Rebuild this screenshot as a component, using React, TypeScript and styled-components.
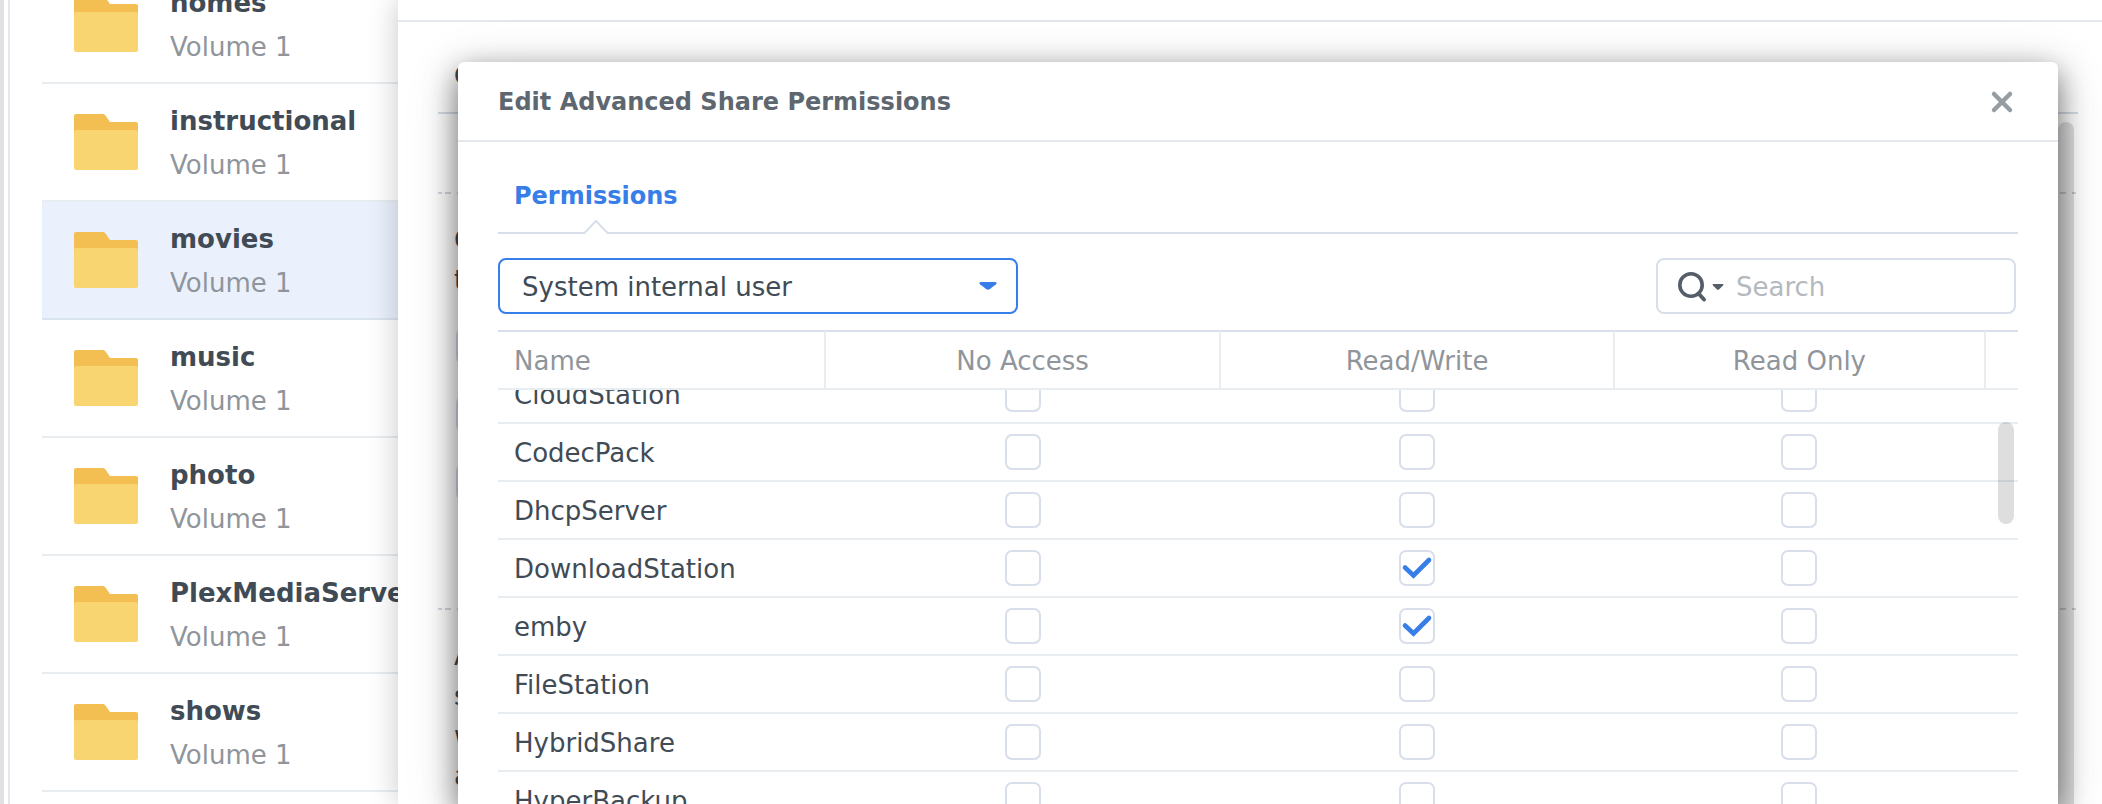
import React, { useLayoutEffect, useRef, useState } from "react";
import styled, { createGlobalStyle } from "styled-components";

const Global = createGlobalStyle`
  * { box-sizing: border-box; }
  body {
    margin: 0;
    background: #fff;
    color: #414b55;
    font-family: Verdana, "DejaVu Sans", sans-serif;
    font-size: 26px;
    line-height: 32px;
  }
  button, input, select { font: inherit; color: inherit; }
`;

const Desktop = styled.div`
  display: flex;
  height: 100vh;
  overflow: hidden;
  border-left: 4px solid #e0e0e0;
  padding-left: 4px;
`;

const Shares = styled.nav`
  flex: 0 0 390px;
  min-width: 0;
  overflow: hidden;
  border-left: 2px solid #e2e8ee;
  padding-left: 32px;
`;

const ShareList = styled.ul`
  list-style: none;
  margin: -34px 0 0;
  padding: 0;
`;

const ShareRow = styled.li<{ $selected?: boolean }>`
  display: flex;
  align-items: center;
  gap: 32px;
  height: 118px;
  padding: 0 32px;
  white-space: nowrap;
  border-bottom: 2px solid ${(p) => (p.$selected ? "#dae3f0" : "#e8edf2")};
  background: ${(p) => (p.$selected ? "#eaf1fc" : "#fff")};
`;

const FolderIcon = styled.svg`
  flex: none;
`;

const ShareText = styled.div`
  display: flex;
  flex-direction: column;
  gap: 12px;
  padding-top: 2px;
`;

const ShareName = styled.strong`
  font-weight: 700;
`;

const ShareVolume = styled.span`
  color: #8f959b;
`;

const EditPanel = styled.section`
  position: relative;
  flex: 1;
  min-width: 0;
  background: #fff;
  box-shadow: 0 0 28px rgba(0, 0, 0, 0.22);
`;

const PanelHeader = styled.header`
  height: 22px;
  border-bottom: 2px solid #e2e8ee;
`;

const PanelBody = styled.div`
  margin: 0 24px 0 40px;
`;

const PanelTabs = styled.div`
  height: 92px;
  padding: 38px 16px 0;
  border-bottom: 2px solid #d5dde6;
  font-weight: 700;
`;

const PanelSection = styled.div<{ $height: number }>`
  height: ${(p) => p.$height}px;
  padding: 26px 16px 0;
  line-height: 40px;
  background: repeating-linear-gradient(
      90deg,
      #d0d7df 0 4px,
      transparent 4px 7px,
      #d0d7df 7px 13px,
      transparent 13px 19px
    )
    bottom / 100% 2px no-repeat;
`;

const PanelText = styled.p`
  margin: 0;
`;

const PanelChecks = styled.div`
  display: grid;
  gap: 32px;
  padding: 28px 2px;
`;

const PanelThumb = styled.div`
  position: absolute;
  top: 122px;
  right: 28px;
  bottom: 0;
  width: 16px;
  border-radius: 8px 8px 0 0;
  background: rgba(0, 0, 0, 0.13);
`;

const Dialog = styled.section`
  position: absolute;
  inset: 62px 44px 0 60px;
  display: flex;
  flex-direction: column;
  border-radius: 6px 6px 0 0;
  background: #fff;
  box-shadow: 0 10px 30px rgba(0, 0, 0, 0.55), 0 10px 60px rgba(0, 0, 0, 0.12);
`;

const DialogHeader = styled.header`
  display: flex;
  align-items: center;
  justify-content: space-between;
  height: 80px;
  padding: 2px 40px 0;
  border-bottom: 2px solid #e2e8ee;
`;

const Title = styled.h1`
  margin: 0;
  font-size: 24px;
  line-height: 32px;
  color: #5e6770;
`;

const CloseButton = styled.button`
  display: flex;
  padding: 4px;
  border: 0;
  background: none;
`;

const DialogBody = styled.div`
  flex: 1;
  min-height: 0;
  display: flex;
  flex-direction: column;
  padding: 0 40px;
`;

const Tabs = styled.div`
  display: flex;
  height: 92px;
  padding: 0 16px;
  border-bottom: 2px solid #d8dfea;
`;

const Tab = styled.button`
  position: relative;
  padding: 38px 0 20px;
  border: 0;
  background: none;
  color: #377ee8;
  font-size: 24px;
  line-height: 32px;
  font-weight: 700;
`;

const TabArrow = styled.svg`
  position: absolute;
  left: 50%;
  bottom: -2px;
  margin-left: -12px;
`;

const Toolbar = styled.div`
  display: flex;
  justify-content: space-between;
  padding: 24px 2px 16px 0;
`;

const SelectBox = styled.div`
  position: relative;
  width: 520px;
`;

const UserSelect = styled.select`
  appearance: none;
  display: block;
  width: 100%;
  height: 56px;
  padding: 2px 56px 0 22px;
  border: 2px solid #377ee8;
  border-radius: 8px;
  outline: none;
  background: #fff;
`;

const SelectArrow = styled.svg`
  position: absolute;
  right: 21px;
  top: 24px;
  pointer-events: none;
`;

const SearchBox = styled.label`
  display: flex;
  align-items: center;
  width: 360px;
  height: 56px;
  padding: 2px 20px 0;
  border: 2px solid #d8dfea;
  border-radius: 8px;
`;

const SearchInput = styled.input`
  flex: 1;
  min-width: 0;
  margin-left: 10px;
  padding: 0;
  border: 0;
  outline: none;
  background: none;
  &::placeholder { color: #b4b9be; opacity: 1; }
`;

const Grid = styled.div`
  position: relative;
  flex: 1;
  min-height: 0;
`;

const GridScroller = styled.div`
  height: 100%;
  overflow-y: auto;
  scrollbar-width: none;
`;

const Thumb = styled.div`
  position: absolute;
  z-index: 2;
  top: 92px;
  right: 4px;
  width: 16px;
  height: 102px;
  border-radius: 8px;
  background: rgba(0, 0, 0, 0.13);
`;

const Table = styled.table`
  width: 100%;
  table-layout: fixed;
  border-collapse: separate;
  border-spacing: 0;
`;

const Col = styled.col<{ $width?: string }>`
  width: ${(p) => p.$width ?? "auto"};
`;

const HeadCell = styled.th`
  position: sticky;
  top: 0;
  z-index: 1;
  height: 60px;
  padding: 2px 0 0;
  border: 0 solid #e8edf2;
  border-width: 2px 2px 2px 0;
  border-top-color: #d8dfea;
  background: #fff;
  color: #8f959b;
  font-weight: 400;
  &:first-child { padding-left: 16px; text-align: left; }
  &:last-child { border-right: 0; }
`;

const cellLine = `
  height: 58px;
  border-bottom: 2px solid #e8edf2;
`;

const NameCell = styled.th`
  ${cellLine}
  padding: 2px 0 0 16px;
  text-align: left;
  font-weight: 400;
`;

const Cell = styled.td`
  ${cellLine}
  padding: 0 2px 0 0;
`;

const CheckBox = styled.span`
  position: relative;
  display: block;
  width: 36px;
  height: 36px;
  margin: 0 auto;
`;

const CheckInput = styled.input<{ $dim?: boolean }>`
  appearance: none;
  display: block;
  width: 36px;
  height: 36px;
  margin: 0;
  border: 2px solid #d8dfea;
  border-radius: 7px;
  background: ${(p) => (p.$dim ? "#e6ebf0" : "#fff")};
`;

const CheckMark = styled.svg`
  position: absolute;
  inset: 0;
  pointer-events: none;
`;

const Folder = () => (
  <FolderIcon width="64" height="56" viewBox="0 0 64 56" aria-hidden="true">
    <path d="M0 2a2 2 0 0 1 2-2h27q1.500 0 2.500 1.500L36 8h26a2 2 0 0 1 2 2v10H0z" fill="#f3bf52" />
    <path d="M0 18q0-2 2-2h60q2 0 2 2v36a2 2 0 0 1-2 2H2a2 2 0 0 1-2-2z" fill="#f8d570" />
  </FolderIcon>
);

const shares = ["homes", "instructional", "movies", "music", "photo", "PlexMediaServer", "shows"];
const columns = ["No Access", "Read/Write", "Read Only"];
const users = [
  "CloudStation",
  "CodecPack",
  "DhcpServer",
  "DownloadStation",
  "emby",
  "FileStation",
  "HybridShare",
  "HyperBackup",
];

export default function App() {
  const scroller = useRef<HTMLDivElement>(null);
  const [granted, setGranted] = useState<Record<string, string>>({
    DownloadStation: "Read/Write",
    emby: "Read/Write",
  });

  // Open with the first row partly scrolled under the header.
  useLayoutEffect(() => {
    if (scroller.current) scroller.current.scrollTop = 24;
  }, []);

  const toggle = (user: string, column: string) =>
    setGranted((g) => ({ ...g, [user]: g[user] === column ? "" : column }));

  return (
    <>
      <Global />
      <Desktop>
        <Shares aria-label="Shared folders">
          <ShareList>
            {shares.map((name) => (
              <ShareRow key={name} $selected={name === "movies"}>
                <Folder />
                <ShareText>
                  <ShareName>{name}</ShareName>
                  <ShareVolume>Volume 1</ShareVolume>
                </ShareText>
              </ShareRow>
            ))}
          </ShareList>
        </Shares>
        <EditPanel>
          <PanelHeader />
          <PanelBody aria-hidden="true">
            <PanelTabs>G</PanelTabs>
            <PanelSection $height={80} />
            <PanelSection $height={416}>
              <PanelText>C</PanelText>
              <PanelText>t</PanelText>
              <PanelChecks>
                <CheckInput type="checkbox" disabled $dim />
                <CheckInput type="checkbox" disabled $dim />
                <CheckInput type="checkbox" disabled $dim />
              </PanelChecks>
            </PanelSection>
            <PanelSection $height={200}>
              <PanelText>A</PanelText>
              <PanelText>s</PanelText>
              <PanelText>w</PanelText>
              <PanelText>a</PanelText>
            </PanelSection>
          </PanelBody>
          <PanelThumb />
          <Dialog role="dialog" aria-labelledby="dialog-title">
            <DialogHeader>
              <Title id="dialog-title">Edit Advanced Share Permissions</Title>
              <CloseButton type="button" aria-label="Close">
                <svg width="24" height="24" viewBox="0 0 24 24" aria-hidden="true">
                  <path d="M4 4l16 16M20 4L4 20" stroke="#959ca2" strokeWidth="4.500" strokeLinecap="round" />
                </svg>
              </CloseButton>
            </DialogHeader>
            <DialogBody>
              <Tabs role="tablist">
                <Tab type="button" role="tab" aria-selected="true">
                  Permissions
                  <TabArrow width="24" height="14" viewBox="0 0 24 14" aria-hidden="true">
                    <path d="M0 14L12 1l12 13z" fill="#fff" />
                    <path d="M0 13.500L12 1l12 12.500" fill="none" stroke="#d8dfea" strokeWidth="2" />
                  </TabArrow>
                </Tab>
              </Tabs>
              <Toolbar>
                <SelectBox>
                  <UserSelect aria-label="User type">
                    <option>System internal user</option>
                  </UserSelect>
                  <SelectArrow width="18" height="8" viewBox="0 0 18 8" aria-hidden="true">
                    <path d="M1.500 0h15q2 .5 .5 2.200l-6 4.800q-2 1.500-4 0L1 2.200Q-.5 .5 1.500 0z" fill="#377ee8" />
                  </SelectArrow>
                </SelectBox>
                <SearchBox>
                  <svg width="48" height="32" viewBox="0 0 48 32" aria-hidden="true">
                    <circle cx="13" cy="14" r="11.200" fill="none" stroke="#555e68" strokeWidth="3.600" />
                    <path d="M20.500 22.500l5.500 6" stroke="#555e68" strokeWidth="4" strokeLinecap="round" />
                    <path d="M35 13h10q1 .5 0 1.500l-4 4q-1 .6-2 0l-4-4q-1-1 0-1.500z" fill="#555e68" />
                  </svg>
                  <SearchInput type="search" placeholder="Search" aria-label="Search" />
                </SearchBox>
              </Toolbar>
              <Grid>
                <GridScroller ref={scroller}>
                  <Table>
                    <colgroup>
                      <Col $width="328px" />
                      <Col $width="26%" />
                      <Col $width="25.9%" />
                      <Col />
                      <Col $width="32px" />
                    </colgroup>
                    <thead>
                      <tr>
                        <HeadCell scope="col">Name</HeadCell>
                        {columns.map((c) => (
                          <HeadCell key={c} scope="col">{c}</HeadCell>
                        ))}
                        <HeadCell aria-hidden="true" />
                      </tr>
                    </thead>
                    <tbody>
                      {users.map((user) => (
                        <tr key={user}>
                          <NameCell scope="row">{user}</NameCell>
                          {columns.map((c) => (
                            <Cell key={c}>
                              <CheckBox>
                                <CheckInput
                                  type="checkbox"
                                  aria-label={`${user}: ${c}`}
                                  checked={granted[user] === c}
                                  onChange={() => toggle(user, c)}
                                />
                                {granted[user] === c && (
                                  <CheckMark width="36" height="36" viewBox="0 0 36 36" aria-hidden="true">
                                    <path d="M6 17.500l8.500 8L30 10" fill="none" stroke="#377ee8" strokeWidth="4.600" strokeLinecap="round" />
                                  </CheckMark>
                                )}
                              </CheckBox>
                            </Cell>
                          ))}
                          <Cell />
                        </tr>
                      ))}
                    </tbody>
                  </Table>
                </GridScroller>
                <Thumb />
              </Grid>
            </DialogBody>
          </Dialog>
        </EditPanel>
      </Desktop>
    </>
  );
}
